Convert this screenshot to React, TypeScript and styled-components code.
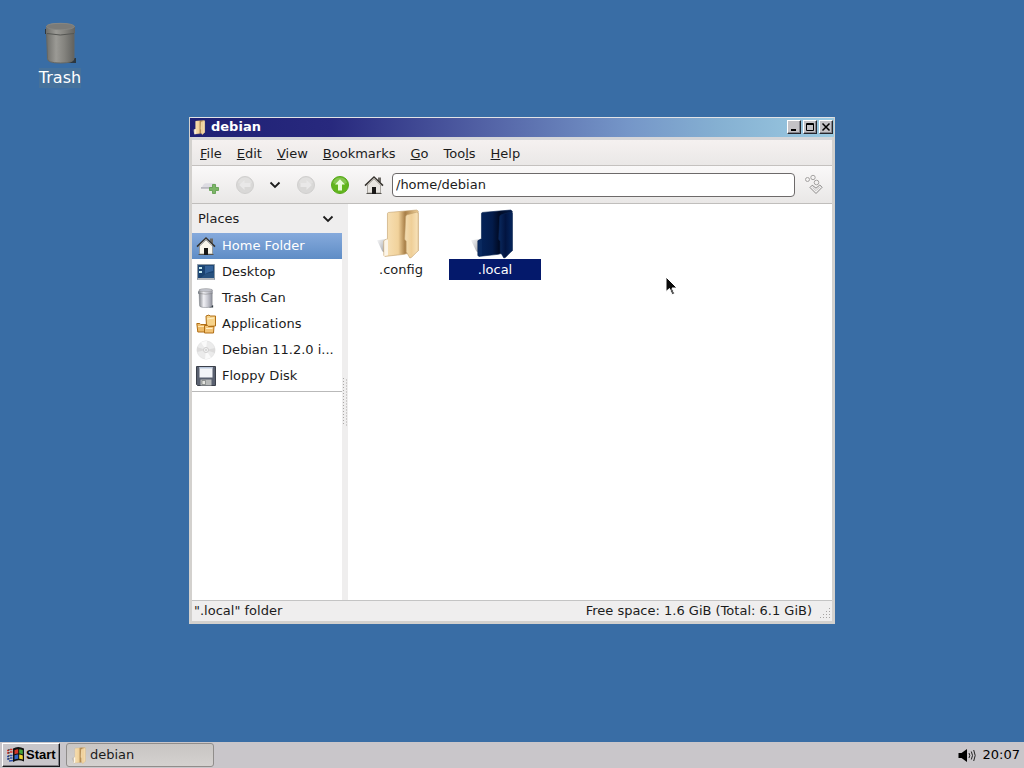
import React from "react";
import styled, { createGlobalStyle, css } from "styled-components";

const GlobalStyle = createGlobalStyle`
  * { box-sizing: border-box; }
  body {
    margin: 0;
    font-family: "DejaVu Sans", sans-serif;
    font-size: 13px;
    line-height: 16px;
    color: #1c1c1c;
    cursor: default;
  }
  button, input { font: inherit; color: inherit; }
  button { border: 0; padding: 0; background: none; }
  svg { display: block; flex: none; }
`;

const Screen = styled.div`
  display: flex;
  flex-direction: column;
  height: 100vh;
  background: #396da5;
`;

const Desktop = styled.main`
  position: relative;
  flex: 1;
  min-height: 0;
  display: flex;
  padding: 117px 189px 118px;
`;

const DesktopIcon = styled.button`
  position: absolute;
  left: 36px;
  top: 20px;
  display: flex;
  flex-direction: column;
  align-items: center;
  width: 48px;
`;

const DesktopLabel = styled.span`
  font-size: 16px;
  line-height: 20px;
  color: #fff;
  background: #45719b;
`;

const Window = styled.section`
  flex: 1;
  min-width: 0;
  display: flex;
  flex-direction: column;
  border: 3px solid #d3d1ce;
  border-top: 1px solid #e2e3e6;
  background: #fff;
`;

const TitleBar = styled.header`
  display: flex;
  align-items: center;
  gap: 4px;
  height: 19px;
  margin: 0 -2px;
  padding: 0 1px 0 2px;
  color: #fff;
  background: linear-gradient(90deg, #1e2074 0%, #28297e 22%, #5160a4 45%, #7596c8 68%, #85b0d2 82%, #9ccbe2 100%);
`;

const Title = styled.h1`
  flex: 1;
  margin: 0;
  font-size: 13px;
  line-height: 16px;
  padding-bottom: 2px;
`;

const TitleButtons = styled.div`
  display: flex;
  gap: 2px;
  padding-bottom: 1px;
`;

const TitleButton = styled.button`
  width: 14px;
  height: 14px;
  border: 1px solid;
  border-color: #fff #26262c #26262c #fff;
  background: #c3c2c6;
  box-shadow: inset -1px -1px #85858c;
`;

const MenuBar = styled.nav`
  display: flex;
  gap: 15px;
  height: 29px;
  padding: 4px 8px 0;
  border-top: 3px solid #d5d6d9;
  border-bottom: 1px solid #c4c1bf;
  background: linear-gradient(#f5f1f0, #eae8e7);
`;

const MenuItem = styled.button`
  height: 20px;
  u { text-underline-offset: 1px; }
`;

const Toolbar = styled.div`
  display: flex;
  align-items: center;
  height: 38px;
  padding: 0 8px;
  border-bottom: 1px solid #c0bebc;
  background: linear-gradient(#faf9f9, #e9e7e6);
`;

const ToolButton = styled.button<{ $before?: number }>`
  margin-left: ${(p) => p.$before ?? 0}px;
`;

const PathInput = styled.input`
  flex: 1;
  min-width: 0;
  height: 24px;
  margin: 0 9px 0 8px;
  padding: 0 3px;
  border: 1px solid #6d6a6a;
  border-radius: 4px;
  background: #fff;
  outline: 0;
`;

const Content = styled.div`
  flex: 1;
  min-height: 0;
  display: flex;
`;

const Sidebar = styled.aside`
  width: 150px;
`;

const PlacesHeader = styled.button`
  display: flex;
  align-items: center;
  justify-content: space-between;
  width: 100%;
  height: 29px;
  padding: 0 8px 0 6px;
  background: #efeeee;
`;

const PlacesList = styled.ul`
  margin: 0;
  padding: 0 0 2px;
  list-style: none;
  border-bottom: 1px solid #b9b9b9;
`;

const Place = styled.button<{ $active?: boolean }>`
  display: flex;
  align-items: center;
  gap: 6px;
  width: 100%;
  height: 26px;
  padding: 0 4px;
  text-align: left;
  ${(p) =>
    p.$active &&
    css`
      color: #fff;
      background: linear-gradient(#86aadc, #5f8dc6);
    `}
`;

const PlaceName = styled.span`
  white-space: nowrap;
  padding-bottom: 1px;
`;

const Splitter = styled.div`
  display: flex;
  align-items: center;
  justify-content: center;
  width: 6px;
  background: #efeeee;
`;

const Files = styled.div`
  flex: 1;
  display: flex;
  align-items: flex-start;
  gap: 2px;
  padding: 5px 7px;
`;

const FileItem = styled.button`
  display: flex;
  flex-direction: column;
  align-items: center;
  width: 92px;
`;

const FileName = styled.span<{ $selected?: boolean }>`
  padding: 3px 0 2px;
  ${(p) =>
    p.$selected &&
    css`
      align-self: stretch;
      color: #fff;
      background: #04196b;
    `}
`;

const StatusBar = styled.footer`
  display: flex;
  align-items: center;
  justify-content: space-between;
  height: 21px;
  padding-left: 2px;
  border-top: 1px solid #c4c4c4;
  background: #efeeee;
`;

const FreeSpace = styled.div`
  display: flex;
  align-items: center;
  gap: 6px;
`;

const Pointer = styled.svg`
  position: absolute;
  left: 665px;
  top: 276px;
`;

const Taskbar = styled.footer`
  display: flex;
  align-items: center;
  height: 26px;
  padding: 0 4px 0 2px;
  background: #c9c6ca;
`;

const StartButton = styled.button`
  display: flex;
  align-items: center;
  gap: 1px;
  height: 24px;
  width: 58px;
  padding-left: 3px;
  border: 1px solid;
  border-color: #fff #17171b #17171b #fff;
  box-shadow: inset -1px -1px #808085;
  font-family: "Liberation Sans", Arial, sans-serif;
  font-size: 13px;
  font-weight: bold;
  color: #000;
  background: #c8c6ca;
`;

const TaskButton = styled.button`
  display: flex;
  align-items: center;
  gap: 2px;
  width: 148px;
  height: 24px;
  margin-left: 6px;
  padding-left: 4px;
  border: 1px solid #908d8b;
  border-radius: 3px;
  background: linear-gradient(#c8c5c3, #d4d1cf);
`;

const Tray = styled.div`
  display: flex;
  align-items: center;
  gap: 6px;
  margin-left: auto;
  color: #000;
`;

const FolderIcon = ({ size, dark }: { size: number; dark?: boolean }) => {
  const c = dark
    ? { back: "#031b4a", backLight: "#04245c", front: "#021440", edge: "#0a2350", fold: "#000a24", light: "#0a2a60" }
    : { back: "#f1d29b", backLight: "#f8e3bb", front: "#efcf98", edge: "#c3a26e", fold: "#a87f48", light: "#f3ddb3" };
  const id = `${dark ? "d" : "l"}${size}`;
  return (
    <svg width={size} height={size} viewBox="0 0 48 48" aria-hidden="true">
      <defs>
        <linearGradient id={`b${id}`} x1="0" x2="1" y1="0" y2="0">
          <stop offset="0" stopColor={c.backLight} />
          <stop offset=".42" stopColor={c.back} />
          <stop offset=".62" stopColor={c.fold} />
          <stop offset="1" stopColor={c.back} />
        </linearGradient>
        <linearGradient id={`f${id}`} x1="0" x2="1" y1="0" y2="0">
          <stop offset="0" stopColor={c.light} />
          <stop offset=".5" stopColor={c.front} />
          <stop offset="1" stopColor={c.backLight} />
        </linearGradient>
        <linearGradient id={`s${id}`} x1="0" x2="1" y1="0" y2="1">
          <stop offset="0" stopColor="#aaadb4" stopOpacity=".1" />
          <stop offset="1" stopColor="#70747c" />
        </linearGradient>
      </defs>
      <path d="M1 30l11-1.500v16l-6-4z" fill={`url(#s${id})`} />
      <path d="M11 4.500q0-1 1-1.200l27-2.300 1.500 1v38L27 43.500l-18.500 2-1-1v-14l3.500-2z" fill={`url(#b${id})`} stroke={c.edge} strokeWidth=".6" />
      <path d="M8 30.500l2.500-1.500 1 1v14.500l-3.500.7z" fill={dark ? c.light : "#fbf5ea"} />
      <path d="M28.500 7.500q0-1.500 1.500-2L39 3l1.500 1v36L34 46.500l-1.500.5-3.500-6v-10l-1.500-2z" fill={`url(#f${id})`} stroke={c.edge} strokeWidth=".6" />
    </svg>
  );
};

const HomeIcon = ({ light }: { light?: boolean }) => (
  <svg width="20" height="20" viewBox="0 0 20 20" aria-hidden="true">
    <path d="M14 2.500h3v5h-3z" fill="#6b6864" />
    <path d="M3.500 10L10 4l6.500 6v8h-13z" fill={light ? "#faf7ed" : "#e7e4df"} stroke="#8c8983" strokeWidth=".7" />
    <path d="M2.500 18.500h15" stroke="#55534f" />
    <path d="M8 12h4v7H8z" fill="#191817" />
    <path d="M1 10.700L10 2l9 8.700" fill="none" stroke="#37342f" strokeWidth="1.600" />
    <path d="M4 9l6-5.500 6 5.500" fill="none" stroke="#b9b4ac" />
  </svg>
);

const RoundArrow = ({ dir, green }: { dir: "left" | "right" | "up"; green?: boolean }) => (
  <svg width="20" height="20" viewBox="0 0 20 20" aria-hidden="true">
    <circle cx="10" cy="10" r="8.500" fill={green ? "#62b51d" : "#d9d8d7"} stroke={green ? "#55a81a" : "#d0cfce"} />
    <path d="M3 8a7.200 7.200 0 0 1 14 0q-7 3-14 0z" fill="#fff" opacity=".22" />
    <path
      d="M10 4.200l5 5.300h-3v6H8v-6H5z"
      fill={green ? "#e9fbd8" : "#e9e8e8"}
      transform={dir === "left" ? "rotate(-90 10 10)" : dir === "right" ? "rotate(90 10 10)" : undefined}
    />
  </svg>
);

const Chevron = () => (
  <svg width="12" height="10" viewBox="0 0 12 10" aria-hidden="true">
    <path d="M1.500 2.500L6 7l4.500-4.500" fill="none" stroke="#1c1c1c" strokeWidth="1.800" />
  </svg>
);

const NewTabIcon = () => (
  <svg width="20" height="20" viewBox="0 0 20 20" aria-hidden="true">
    <path d="M2 12.500q1-4 4-4.200h8q2.500 0 2.500 4.200z" fill="#dddce2" />
    <path d="M1 12h13v1.800H1z" fill="#bbbac1" />
    <path d="M12.500 9.500h3v3h3v3h-3v3h-3v-3h-3v-3h3z" fill="#7db568" stroke="#5b9a47" strokeWidth=".8" />
  </svg>
);

const GoIcon = () => (
  <svg width="20" height="22" viewBox="0 0 20 22" fill="none" stroke="#a5a3a2" aria-hidden="true">
    <circle cx="3.500" cy="5.500" r="2" />
    <circle cx="9" cy="3.500" r="2.200" />
    <circle cx="12.500" cy="8.500" r="2.300" />
    <path d="M6 13.500l2.200-2.300 3.800 3 3.800-3.200 2.300 2.300L12 19.500z" fill="#f2f1f1" stroke="#8b8988" />
    <path d="M8.500 13.300l3.500 3.400 4-4" stroke="#c5c3c2" />
  </svg>
);

const BinIcon = ({ dark }: { dark?: boolean }) => {
  const id = dark ? "binDark" : "binLight";
  return (
    <svg width={dark ? 48 : 20} height={dark ? 48 : 20} viewBox={dark ? "0 0 48 48" : "4 2 42 42"} aria-hidden="true">
      <defs>
        <linearGradient id={id} x1="0" x2="1">
          <stop offset="0" stopColor={dark ? "#6e6e6a" : "#83868c"} />
          <stop offset=".35" stopColor={dark ? "#9b9a95" : "#f1f1f5"} />
          <stop offset=".65" stopColor={dark ? "#84837e" : "#c8c9d1"} />
          <stop offset="1" stopColor={dark ? "#62625f" : "#8f919c"} />
        </linearGradient>
      </defs>
      <path d="M32 38h8v5h-8zM9 9h4v5H9z" fill="#2c3740" />
      <path d="M10.500 12h27.500v26.500q0 4.500-13.500 4.500t-13-4.500z" fill={`url(#${id})`} stroke={dark ? "#666763" : "#73767d"} />
      <path d="M10 7q0-4 14-4t15 4v6q-2 2-15 2t-14-2z" fill={`url(#${id})`} />
      <ellipse cx="24.500" cy="6.500" rx="14" ry="3.200" fill={dark ? "#7b7b78" : "#c2c4cc"} stroke={dark ? "#888884" : "#888"} strokeWidth=".8" />
      <path d="M11 13.500q13 3 27 0" fill="none" stroke={dark ? "#555653" : "#777"} />
    </svg>
  );
};

const DesktopPlaceIcon = () => (
  <svg width="20" height="20" viewBox="0 0 20 20" aria-hidden="true">
    <path d="M1.500 2.500h17v15h-17z" fill="#27517f" stroke="#8e9aa5" />
    <path d="M2.500 3.500h15v7q-9 0-13 6h-2z" fill="#1a4371" />
    <path d="M9 4h8v5q-5 1-8 3z" fill="#34639a" />
    <path d="M3 5h3v2H3zM3 9h3v2H3z" fill="#c7edf2" />
    <path d="M2 16h16v2H2z" fill="#b4b8bd" />
  </svg>
);

const AppsIcon = () => (
  <svg width="20" height="20" viewBox="0 0 20 20" fill="#eebb68" stroke="#b16f16" aria-hidden="true">
    <path d="M10 2l3-1 1 1h5.500v10l-9 .5z" fill="#f6d289" />
    <path d="M11 5l7-1" stroke="#fff0c8" />
    <path d="M.8 9.500h3l1 1h6v7.500h-9z" />
    <path d="M2 12.500h8" stroke="#ffe5ad" />
    <path d="M8.500 11.500h3l1 1h5.500l-.5 6.500h-9z" fill="#f3c477" />
    <path d="M10 14.500h6.500" stroke="#fff0c8" />
  </svg>
);

const DiscIcon = () => (
  <svg width="20" height="20" viewBox="0 0 20 20" aria-hidden="true">
    <circle cx="10" cy="10" r="9" fill="#ebebeb" stroke="#e6e6e6" />
    <path d="M10 10L5 2.500A9 9 0 0 1 11 1zM10 10l5 7.500a9 9 0 0 1-6 1.400z" fill="#fafafa" />
    <path d="M10 10l9-2v5zM10 10l-9 2V7z" fill="#dcdbdb" />
    <circle cx="10" cy="10" r="2.500" fill="#f5f5f5" stroke="#cfcece" />
    <circle cx="10" cy="10" r=".8" fill="#b5b5b5" />
  </svg>
);

const FloppyIcon = () => (
  <svg width="20" height="20" viewBox="0 0 20 20" aria-hidden="true">
    <path d="M.5 .5h19v19h-18l-1-1z" fill="#5a6170" stroke="#3b404a" />
    <path d="M3.500 1h13v10.500h-13z" fill="#f3f5f8" />
    <path d="M3.500 1h13v1.500h-13z" fill="#b9c7dc" />
    <path d="M4.500 13.500h11v6h-11z" fill="#b8bab9" />
    <path d="M6 14.500h3.500v4H6z" fill="#e3e3df" stroke="#777b78" strokeWidth=".7" />
  </svg>
);

const FlagIcon = () => (
  <svg width="19" height="18" viewBox="0 0 19 18" aria-hidden="true">
    <path d="M7 2.500q5-3 11 0v13q-6-2.500-11 .5z" fill="#101010" />
    <path d="M8.500 4.200q2-1.200 3.700-1v4.300q-2-.1-3.700.8z" fill="#d5372a" />
    <path d="M13.200 3.300q2 .1 3.600.9v4.200q-1.700-.8-3.600-.9z" fill="#46a43b" />
    <path d="M8.500 9.300q1.700-.9 3.700-.8v4.200q-2 0-3.700.8z" fill="#3264c4" />
    <path d="M13.200 8.500q1.900.1 3.600.9v4.100q-1.600-.7-3.600-.8z" fill="#edd332" />
    <path d="M1 4.500h2M4 3.500h2.500M1 7h2M4 6h2.500" stroke="#d5372a" strokeWidth="1.700" />
    <path d="M1 10.500h2M4 9.500h2.500M1 13h2M4 12h2.500M3 15l4-.5" stroke="#2e50a8" strokeWidth="1.700" />
    <path d="M3 3v11" stroke="#101010" strokeDasharray="1.500 1.500" />
  </svg>
);

const SpeakerIcon = () => (
  <svg width="20" height="16" viewBox="0 0 20 16" fill="none" stroke="#222" aria-hidden="true">
    <path d="M1.500 6h3L10 2v13l-5.500-4h-3z" fill="#000" stroke="none" />
    <path d="M12 6q1.500 2.500 0 5M14.300 4.500q2.400 4 0 8M16.700 3q3 5.500 0 11" />
  </svg>
);

const Grip = () => (
  <svg width="6" height="48" viewBox="0 0 6 48" aria-hidden="true">
    <path d="M1.500 0v48M4.500 1.500v48" stroke="#aaa8a7" strokeDasharray="1 2" />
  </svg>
);

const ResizeGrip = () => (
  <svg width="14" height="16" viewBox="0 0 14 16" aria-hidden="true">
    <path d="M2 14.500h11M5 11.500h8M8 8.500h5M11 5.500h2" stroke="#a5a3a2" strokeDasharray="1 2" />
  </svg>
);

const menus: [string, string, string][] = [
  ["", "F", "ile"],
  ["", "E", "dit"],
  ["", "V", "iew"],
  ["", "B", "ookmarks"],
  ["", "G", "o"],
  ["Too", "l", "s"],
  ["", "H", "elp"],
];

const places = [
  { name: "Home Folder", icon: <HomeIcon light />, active: true },
  { name: "Desktop", icon: <DesktopPlaceIcon /> },
  { name: "Trash Can", icon: <BinIcon /> },
  { name: "Applications", icon: <AppsIcon /> },
  { name: "Debian 11.2.0 i...", icon: <DiscIcon /> },
  { name: "Floppy Disk", icon: <FloppyIcon /> },
];

export default function App() {
  return (
    <Screen>
      <GlobalStyle />
      <Desktop>
        <DesktopIcon>
          <BinIcon dark />
          <DesktopLabel>Trash</DesktopLabel>
        </DesktopIcon>
        <Window>
          <TitleBar>
            <FolderIcon size={15} />
            <Title>debian</Title>
            <TitleButtons>
              <TitleButton aria-label="Minimize">
                <svg width="12" height="12"><path d="M3 9h5" stroke="#000" strokeWidth="2" /></svg>
              </TitleButton>
              <TitleButton aria-label="Maximize">
                <svg width="12" height="12" fill="none" stroke="#000"><path d="M2.500 2.500h7v7h-7zM2 3.500h8" /></svg>
              </TitleButton>
              <TitleButton aria-label="Close">
                <svg width="12" height="12"><path d="M2.500 2.500l7 7M9.500 2.500l-7 7" stroke="#000" strokeWidth="1.500" /></svg>
              </TitleButton>
            </TitleButtons>
          </TitleBar>
          <MenuBar>
            {menus.map(([pre, key, post]) => (
              <MenuItem key={key}>
                {pre}
                <u>{key}</u>
                {post}
              </MenuItem>
            ))}
          </MenuBar>
          <Toolbar>
            <ToolButton aria-label="New tab"><NewTabIcon /></ToolButton>
            <ToolButton $before={15} aria-label="Back" disabled><RoundArrow dir="left" /></ToolButton>
            <ToolButton $before={14} aria-label="History"><Chevron /></ToolButton>
            <ToolButton $before={15} aria-label="Forward" disabled><RoundArrow dir="right" /></ToolButton>
            <ToolButton $before={14} aria-label="Up"><RoundArrow dir="up" green /></ToolButton>
            <ToolButton $before={14} aria-label="Home"><HomeIcon /></ToolButton>
            <PathInput aria-label="Location" defaultValue="/home/debian" />
            <ToolButton aria-label="Go to location"><GoIcon /></ToolButton>
          </Toolbar>
          <Content>
            <Sidebar>
              <PlacesHeader>
                Places
                <Chevron />
              </PlacesHeader>
              <PlacesList>
                {places.map((p) => (
                  <li key={p.name}>
                    <Place $active={p.active}>
                      {p.icon}
                      <PlaceName>{p.name}</PlaceName>
                    </Place>
                  </li>
                ))}
              </PlacesList>
            </Sidebar>
            <Splitter><Grip /></Splitter>
            <Files>
              <FileItem>
                <FolderIcon size={50} />
                <FileName>.config</FileName>
              </FileItem>
              <FileItem>
                <FolderIcon size={50} dark />
                <FileName $selected>.local</FileName>
              </FileItem>
            </Files>
          </Content>
          <StatusBar>
            <span>".local" folder</span>
            <FreeSpace>
              Free space: 1.6 GiB (Total: 6.1 GiB)
              <ResizeGrip />
            </FreeSpace>
          </StatusBar>
        </Window>
        <Pointer width="14" height="20" viewBox="0 0 14 20" aria-hidden="true">
          <path d="M1 1v14.500l3.500-3 2.500 6 2.500-1-2.500-5.500h5z" fill="#0b0b0b" stroke="#fff" />
          <path d="M6 13l2.500 5" stroke="#777" />
        </Pointer>
      </Desktop>
      <Taskbar>
        <StartButton>
          <FlagIcon />
          Start
        </StartButton>
        <TaskButton>
          <FolderIcon size={17} />
          debian
        </TaskButton>
        <Tray>
          <SpeakerIcon />
          <time>20:07</time>
        </Tray>
      </Taskbar>
    </Screen>
  );
}
